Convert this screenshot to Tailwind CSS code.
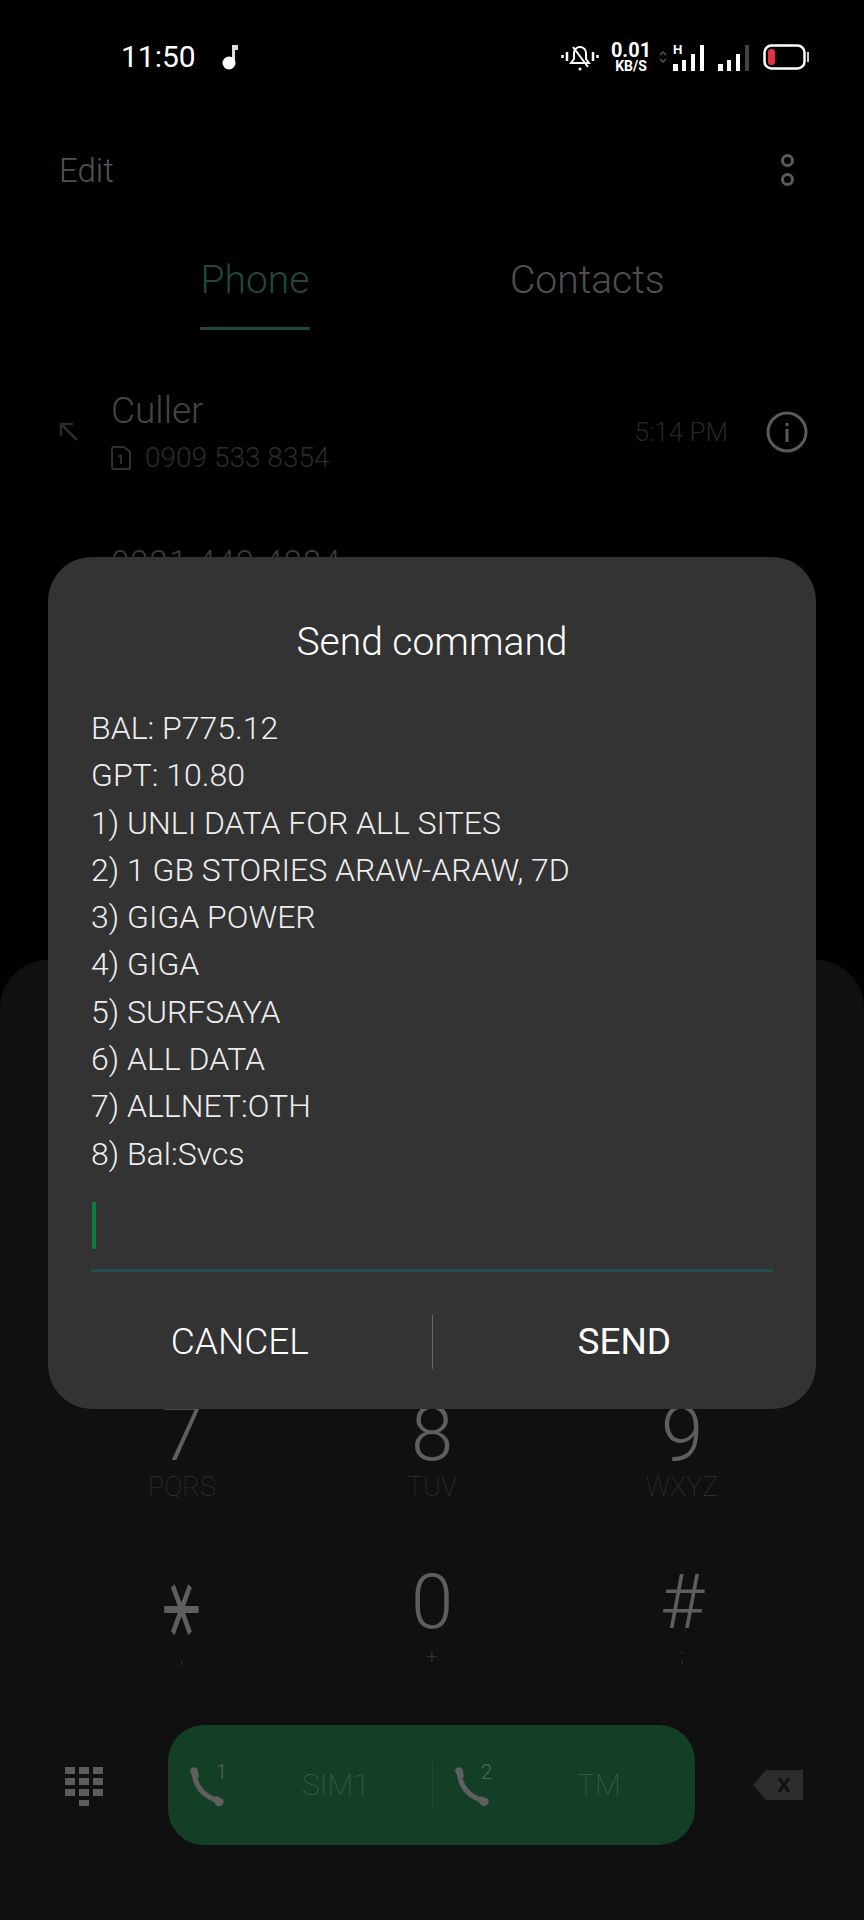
<!DOCTYPE html>
<html>
<head>
<meta charset="utf-8">
<script src="https://cdn.jsdelivr.net/npm/@tailwindcss/browser@4"></script>
</head>
<body class="bg-black">
<div class="relative w-[864px] h-[1920px] overflow-hidden bg-black font-['Roboto','Liberation_Sans',sans-serif] font-light flex flex-col">

  <!-- status bar -->
  <div class="h-[114px] pl-[121px] pr-[55px] flex items-center justify-between text-white shrink-0">
    <div class="flex items-center gap-[26px]">
      <span class="text-[30px] leading-none font-normal">11:50</span>
      <svg width="16" height="26" viewBox="0 0 16 26"><path d="M10 1h6v5h-3v15h-3z" fill="#ddd"/><circle cx="7" cy="19" r="6.5" fill="#fff"/></svg>
    </div>
    <div class="flex items-center">
      <svg width="38" height="30" viewBox="0 0 38 30" class="mr-[12px] ml-[-2px]" fill="none" stroke="#fff" stroke-width="2"><path d="M10 21h18l-3-4v-6a6 6 0 0 0-12 0v6z"/><path d="M12 5l15 20"/><circle cx="19" cy="27" r="1.500" fill="#fff" stroke="none"/><path d="M6 10v9M1.500 13v3M32 10v9M36.500 13v3" stroke-width="2.500"/></svg>
      <div class="flex flex-col items-center text-white font-bold mr-[8px] w-[40px]">
        <span class="text-[20px] leading-[19px]">0.01</span>
        <span class="text-[14px] leading-[13px]">KB/S</span>
      </div>
      <svg width="8" height="14" viewBox="0 0 8 14" class="mr-[6px]" fill="none" stroke="#555" stroke-width="1.500"><path d="M1 5l3-3 3 3M1 9l3 3 3-3"/></svg>
      <svg width="32" height="30" viewBox="0 0 32 30" class="mr-[13px]" fill="#fff"><text x="0" y="12" font-size="13" font-family="Liberation Sans" font-weight="700">H</text><rect x="0" y="22" width="5" height="7"/><rect x="9" y="18" width="4" height="11"/><rect x="18" y="12" width="4" height="17"/><rect x="27" y="3" width="4" height="26"/></svg>
      <svg width="31" height="30" viewBox="0 0 31 30" class="mr-[14px]" fill="#fff"><rect x="0" y="22" width="5" height="7"/><rect x="9" y="18" width="4" height="11"/><rect x="18" y="12" width="4" height="17"/><rect x="27" y="3" width="4" height="26" fill="#444"/></svg>
      <svg width="46" height="26" viewBox="0 0 46 26" fill="none"><rect x="1.500" y="1.500" width="40" height="23" rx="7" stroke="#fff" stroke-width="2.500"/><rect x="5" y="5" width="7" height="16" rx="3" fill="#e0323f"/><rect x="44" y="8" width="2" height="10" fill="#ccc"/></svg>
    </div>
  </div>

  <!-- action bar -->
  <div class="h-[50px] mt-[31px] pl-[59px] pr-[70px] flex items-center justify-between shrink-0">
    <span class="text-[33px] leading-none text-[#525252]">Edit</span>
    <div class="flex flex-col gap-[6px]">
      <span class="block w-[13px] h-[13px] rounded-full border-[3px] border-[#5a5a5a]"></span>
      <span class="block w-[13px] h-[13px] rounded-full border-[3px] border-[#5a5a5a]"></span>
    </div>
  </div>

  <!-- tabs -->
  <div class="mt-[55px] h-[80px] flex shrink-0">
    <div class="ml-[200px] w-[110px] flex flex-col items-center">
      <span class="text-[39px] leading-[60px] text-[#1f4a36] whitespace-nowrap">Phone</span>
      <span class="mt-[17px] block w-full h-[4px] bg-[#1c4a34]"></span>
    </div>
    <div class="ml-[200px]">
      <span class="text-[39px] leading-[60px] text-[#4f4f4f] whitespace-nowrap">Contacts</span>
    </div>
  </div>

  <!-- call list -->
  <div class="mt-[54px] pl-[59px] pr-[56px] flex items-center h-[96px] shrink-0">
    <svg width="20" height="20" viewBox="0 0 20 20" class="mr-[32px]" fill="none" stroke="#2b2b2b" stroke-width="2.500"><path d="M18 18L3 3M2 14V2h12"/></svg>
    <div class="flex flex-col">
      <span class="text-[37px] leading-[46px] text-[#454545] mt-[-2px]">Culler</span>
      <div class="flex items-center gap-[14px] mt-[8px]">
        <svg width="20" height="24" viewBox="0 0 20 24" fill="none" stroke="#303030" stroke-width="2"><path d="M1 3a2 2 0 0 1 2-2h10l6 5v15a2 2 0 0 1-2 2H3a2 2 0 0 1-2-2z"/><path d="M10 9v9M7.500 11l2.500-2" stroke-width="2"/></svg>
        <span class="text-[28px] leading-[32px] text-[#2b2b2b]">0909 533 8354</span>
      </div>
    </div>
    <span class="ml-auto text-[26px] leading-none text-[#262626] mr-[38px]">5:14 PM</span>
    <svg width="42" height="42" viewBox="0 0 42 42" fill="none"><circle cx="21" cy="21" r="19" stroke="#5a5a5a" stroke-width="3"/><rect x="19.500" y="18" width="3" height="13" fill="#5a5a5a"/><rect x="19.500" y="12" width="3" height="3" fill="#5a5a5a"/></svg>
  </div>
  <div class="mt-[61px] pl-[111px] h-[44px] shrink-0">
    <span class="text-[33px] leading-[44px] text-[#3a3a3a] tracking-[1px]">0921 449 4884</span>
  </div>

  <!-- dial pad panel -->
  <div class="mt-auto h-[960px] rounded-t-[48px] bg-[#101010] flex flex-col justify-end shrink-0">
    <div class="grid grid-cols-3 w-[750px] mx-[57px]">
      <div class="flex flex-col items-center">
        <span class="text-[76px] leading-[74px] text-[#5e5e5e]">7</span>
        <span class="text-[27px] leading-[32px] text-[#333333] font-thin">PQRS</span>
      </div>
      <div class="flex flex-col items-center">
        <span class="text-[76px] leading-[74px] text-[#5e5e5e]">8</span>
        <span class="text-[27px] leading-[32px] text-[#333333] font-thin">TUV</span>
      </div>
      <div class="flex flex-col items-center">
        <span class="text-[76px] leading-[74px] text-[#5e5e5e]">9</span>
        <span class="text-[27px] leading-[32px] text-[#333333] font-thin">WXYZ</span>
      </div>
      <div class="flex flex-col items-center mt-[62px]">
        <span class="h-[74px] text-[66px] leading-[74px] text-[#5e5e5e] font-['DejaVu_Sans'] font-normal scale-x-[0.93] scale-y-[1.47]">⚹</span>
        <span class="mt-[5px] text-[20px] leading-[24px] text-[#333333]">,</span>
      </div>
      <div class="flex flex-col items-center mt-[62px]">
        <span class="text-[76px] leading-[74px] text-[#5e5e5e]">0</span>
        <span class="mt-[5px] text-[20px] leading-[24px] text-[#333333]">+</span>
      </div>
      <div class="flex flex-col items-center mt-[62px]">
        <span class="text-[76px] leading-[74px] text-[#5e5e5e]">#</span>
        <span class="mt-[5px] text-[20px] leading-[24px] text-[#333333]">;</span>
      </div>
    </div>

    <div class="mt-[57px] mb-[75px] flex items-center">
      <svg width="40" height="42" viewBox="0 0 40 42" class="ml-[65px] mr-[63px]" fill="#5c5c5c"><rect x="0" y="3" width="10" height="7"/><rect x="14" y="3" width="10" height="7"/><rect x="28" y="3" width="10" height="7"/><rect x="0" y="14" width="10" height="7"/><rect x="14" y="14" width="10" height="7"/><rect x="28" y="14" width="10" height="7"/><rect x="0" y="25" width="10" height="7"/><rect x="14" y="25" width="10" height="7"/><rect x="28" y="25" width="10" height="7"/><rect x="14" y="36" width="10" height="6"/></svg>
      <div class="w-[527px] h-[120px] rounded-[36px] bg-[#143f27] flex items-center">
        <div class="w-[264px] flex items-center">
          <svg width="38" height="46" viewBox="0 0 38 46" class="ml-[20px]"><path d="M6 9C7 24 15 35 32 39" fill="none" stroke="#5f5f5f" stroke-width="5"/><path d="M2 9c0-4 7-6 8 0l1 6-5 2zM24 38l4-4 7 3c2 4-1 8-6 7z" fill="#5f5f5f"/><text x="28" y="17" font-size="20" font-family="Roboto" fill="#5f5f5f">1</text></svg>
          <span class="ml-[76px] text-[30px] leading-none text-[#3f5f4d] font-thin">SIM1</span>
        </div>
        <span class="block w-px h-[46px] bg-[#22492f]"></span>
        <div class="flex-1 flex items-center">
          <svg width="44" height="46" viewBox="0 0 44 46" class="ml-[20px]"><path d="M6 9C7 24 15 35 32 39" fill="none" stroke="#5f5f5f" stroke-width="5"/><path d="M2 9c0-4 7-6 8 0l1 6-5 2zM24 38l4-4 7 3c2 4-1 8-6 7z" fill="#5f5f5f"/><text x="28" y="17" font-size="20" font-family="Roboto" fill="#5f5f5f">2</text></svg>
          <span class="ml-[80px] text-[30px] leading-none text-[#3f5f4d] font-thin">TM</span>
        </div>
      </div>
      <svg width="52" height="34" viewBox="0 0 52 34" class="ml-[58px]"><path d="M0 17L13 2h37v30H13z" fill="#2c2c2c"/><path d="M26 10l10 14M36 10L26 24" stroke="#101010" stroke-width="3"/></svg>
    </div>
  </div>

  <!-- dialog -->
  <div class="absolute left-[48px] top-[557px] w-[768px] h-[852px] rounded-[44px] bg-[#333333] text-white flex flex-col">
    <div class="mt-[58px] text-center text-[39px] leading-[54px]">Send command</div>
    <div class="mt-[36px] px-[43px] text-[32px] leading-[47.3px] text-[#eeeeee] whitespace-nowrap">
      <div>BAL: P775.12</div>
      <div>GPT: 10.80</div>
      <div>1) UNLI DATA FOR ALL SITES</div>
      <div>2) 1 GB STORIES ARAW-ARAW, 7D</div>
      <div>3) GIGA POWER</div>
      <div>4) GIGA</div>
      <div>5) SURFSAYA</div>
      <div>6) ALL DATA</div>
      <div>7) ALLNET:OTH</div>
      <div>8) Bal:Svcs</div>
    </div>
    <div class="mt-[24px] mx-[43px] h-[70px] border-b-[3px] border-[#1f5058]">
      <span class="block ml-[1px] w-[4px] h-[47px] bg-[#0f7a3f]"></span>
    </div>
    <div class="mt-[43px] flex items-center h-[54px]">
      <span class="flex-1 text-center text-[37px] leading-none">CANCEL</span>
      <span class="block w-px h-[54px] bg-[#666666]"></span>
      <span class="flex-1 text-center text-[37px] leading-none font-normal">SEND</span>
    </div>
  </div>
</div>
</body>
</html>
